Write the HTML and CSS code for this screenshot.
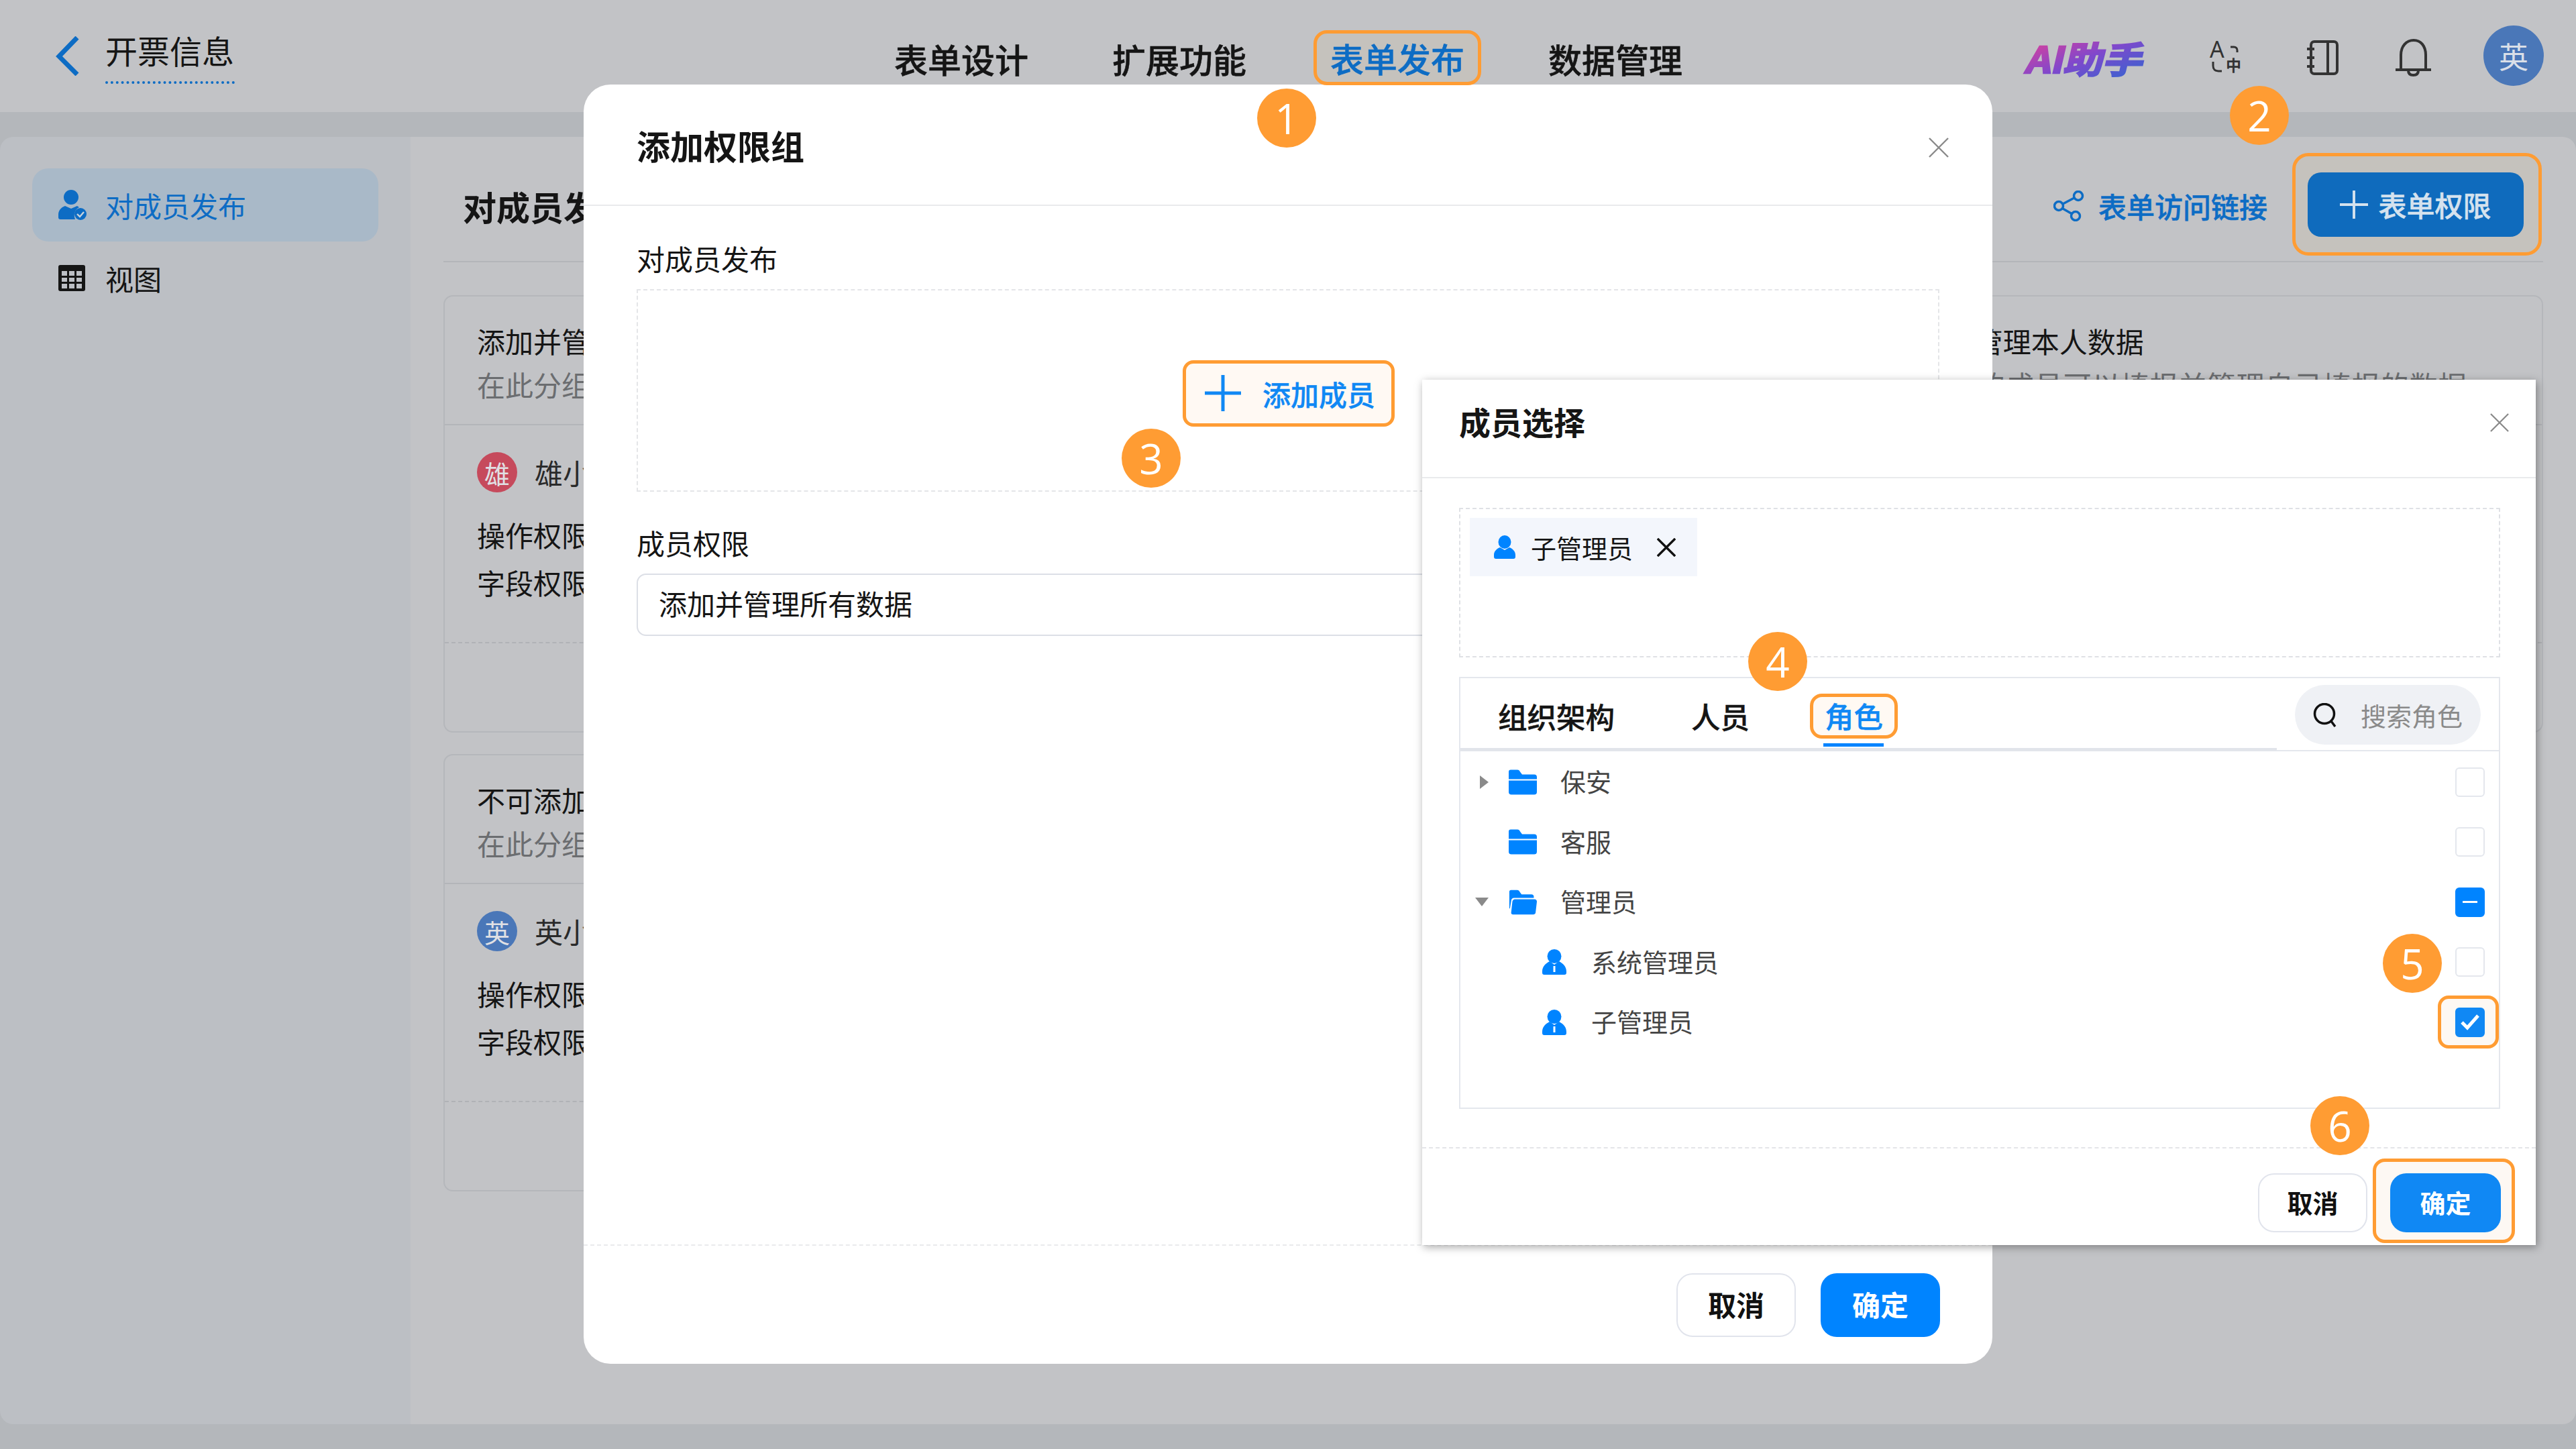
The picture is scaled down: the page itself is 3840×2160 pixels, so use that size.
FILE: index.html
```html
<!DOCTYPE html>
<html lang="zh-CN">
<head>
  <meta charset="UTF-8" />
  <title>开票信息 - 表单发布</title>
  <link rel="stylesheet" href="styles.css">
</head>
<body>

<svg class="icon-defs" width="0" height="0">
  <defs>
    <linearGradient id="ai-grad" x1="0" y1="0" x2="1" y2="1">
      <stop offset="0.1" stop-color="#d8409c"/>
      <stop offset="0.5" stop-color="#8048cc"/>
      <stop offset="0.9" stop-color="#3a62d0"/>
    </linearGradient>
  </defs>
  <symbol id="i-folder" viewBox="0 0 42 37">
    <path fill="#0084ff" d="M0 3a3 3 0 0 1 3-3h10c2 0 3 1 4 3l3 4h18a4 4 0 0 1 4 4v3H0z"/>
    <path fill="#0084ff" d="M0 16h42v17a4 4 0 0 1-4 4H4a4 4 0 0 1-4-4z"/>
  </symbol>
  <symbol id="i-folder-open" viewBox="0 0 46 40">
    <path fill="#0084ff" d="M1 3a3 3 0 0 1 3-3h10c2 0 3 1 4 3l3 4h16a4 4 0 0 1 4 4v2H9c-3 0-5 2-5 5L2 30H1z"/>
    <path fill="#0084ff" d="M10 15h32c3 0 4 2 4 4l-2 17a4 4 0 0 1-4 4H7a3 3 0 0 1-3-3l2-18c0-2 2-4 4-4z"/>
  </symbol>
  <symbol id="i-role" viewBox="0 0 36 38">
    <ellipse fill="#0084ff" cx="18" cy="10.500" rx="10.500" ry="10.500"/>
    <path fill="#0084ff" d="M11 18C5 21 0 26 0 33v2a3 3 0 0 0 3 3h30a3 3 0 0 0 3-3v-2c0-7-5-12-11-15l-7 5z"/>
    <path fill="none" stroke="#fff" stroke-width="3" d="M18 25v9"/>
  </symbol>
  <symbol id="i-person" viewBox="0 0 32 35">
    <ellipse fill="#0084ff" cx="16" cy="10" rx="9.500" ry="10"/>
    <path fill="#0084ff" d="M9 18C4 20 0 24 0 29v3a3 3 0 0 0 3 3h26a3 3 0 0 0 3-3v-3c0-5-4-9-9-11l-7 4z"/>
  </symbol>
  <symbol id="i-x" viewBox="0 0 30 30">
    <path class="x-path" fill="none" stroke="currentColor" d="M1 1l28 28M29 1L1 29"/>
  </symbol>
  <symbol id="i-plus" viewBox="0 0 54 54">
    <path fill="none" stroke="currentColor" stroke-width="5" d="M27 0v54M0 27h54"/>
  </symbol>
</svg>

<header class="topbar">
  <div class="page-title">
    <svg class="back-icon" viewBox="0 0 35 59"><path fill="none" stroke="#0d6cc4" stroke-width="7" d="M32 2L5 30l27 27"/></svg>
    <span class="page-name">开票信息</span>
  </div>
  <nav class="tabs">
    <a class="tab">表单设计</a>
    <a class="tab">扩展功能</a>
    <a class="tab tab-active">表单发布</a>
    <a class="tab">数据管理</a>
  </nav>
  <div class="tools">
    <svg class="ai-logo" viewBox="0 0 179 50">
      <text class="ai-logo-text" x="0" y="44" textLength="175" lengthAdjust="spacingAndGlyphs" transform="translate(9 0) skewX(-13)" fill="url(#ai-grad)" stroke="url(#ai-grad)">AI助手</text>
    </svg>
    <svg class="tool-icon tool-lang" viewBox="0 0 46 48">
      <text x="0" y="24" class="lang-a">A</text>
      <text x="24" y="44" class="lang-zh">中</text>
      <path fill="none" stroke="#333" stroke-width="3" d="M31 8h5c3 0 5 2 5 5v3M5 30v6c0 5 3 8 8 8h5"/>
    </svg>
    <svg class="tool-icon tool-book" viewBox="0 0 48 52">
      <path fill="none" stroke="#333" stroke-width="4" d="M7 7c0-3 2-5 5-5h29c3 0 5 2 5 5v38c0 3-2 5-5 5H12c-3 0-5-2-5-5zM32 2v48M1 13h11M1 26h11M1 39h11"/>
    </svg>
    <svg class="tool-icon tool-bell" viewBox="0 0 55 55">
      <path fill="none" stroke="#333" stroke-width="4" d="M9 46V24C9 11 17 2 28 2s18 9 18 22v22M1 46h53M20 47c0 5 3 7 7.500 7s7.500-2 7.500-7"/>
    </svg>
    <span class="user-avatar">英</span>
  </div>
</header>

<div class="panel">
  <aside class="sidebar">
    <div class="side-item side-item-active">
      <svg class="side-icon" viewBox="0 0 42 46">
        <ellipse fill="#0d6cc4" cx="19" cy="11" rx="11" ry="11"/>
        <path fill="#0d6cc4" d="M10 24C4 26 0 31 0 37v4a3 3 0 0 0 3 3h22c-3-8 0-15 6-18l-3-2-9 4z"/>
        <circle fill="#0d6cc4" cx="33" cy="36" r="9"/>
        <path fill="none" stroke="#c8d3dd" stroke-width="2.400" d="M28 36l4 4 6-7"/>
      </svg>
      <span>对成员发布</span>
    </div>
    <div class="side-item">
      <svg class="side-icon side-icon-grid" viewBox="0 0 40 39">
        <rect fill="#151515" width="40" height="39" rx="3"/>
        <path fill="#bcbfc4" d="M5 9h8v7H5zM16 9h8v7h-8zM27 9h8v7h-8zM5 19h8v6H5zM16 19h8v6h-8zM27 19h8v6h-8zM5 28h8v7H5zM16 28h8v7h-8zM27 28h8v7h-8z"/>
      </svg>
      <span>视图</span>
    </div>
  </aside>

  <main class="content">
    <div class="content-head">
      <h2 class="content-title">对成员发布</h2>
      <a class="share-link">
        <svg class="share-icon" viewBox="0 0 46 46">
          <g fill="none" stroke="#0d6cc4" stroke-width="3.500">
            <circle cx="37" cy="8" r="6.500"/><circle cx="8" cy="23" r="6.500"/><circle cx="33" cy="38" r="6.500"/>
            <path d="M31 11L14 20M14 27l14 8"/>
          </g>
        </svg>
        表单访问链接
      </a>
      <div class="head-action">
        <button class="add-perm">
          <svg class="add-perm-icon"><use href="#i-plus"/></svg>
          表单权限
        </button>
      </div>
    </div>

    <div class="cards">
      <section class="card">
        <div class="card-head">
          <div class="card-title">添加并管理所有数据</div>
          <div class="card-sub">在此分组中的成员可以添加并管理所有数据</div>
        </div>
        <div class="card-body">
          <div class="member"><span class="member-avatar avatar-red">雄</span><span class="member-name">雄小</span></div>
          <div class="perm-line perm-first">操作权限</div>
          <div class="perm-line">字段权限</div>
        </div>
        <div class="card-foot"></div>
      </section>
      <section class="card"></section>
      <section class="card">
        <div class="card-head">
          <div class="card-title">填报并管理本人数据</div>
          <div class="card-sub card-sub-wide">分组中的成员可以填报并管理自己填报的数据</div>
        </div>
        <div class="card-body"></div>
        <div class="card-foot"></div>
      </section>
      <section class="card">
        <div class="card-head">
          <div class="card-title">不可添加</div>
          <div class="card-sub">在此分组</div>
        </div>
        <div class="card-body">
          <div class="member"><span class="member-avatar avatar-blue">英</span><span class="member-name">英小</span></div>
          <div class="perm-line perm-first">操作权限</div>
          <div class="perm-line">字段权限</div>
        </div>
        <div class="card-foot"></div>
      </section>
    </div>
  </main>
</div>

<!-- 添加权限组 -->
<div class="modal modal-group">
  <div class="group-head">
    <h3 class="group-title">添加权限组</h3>
    <svg class="close-icon"><use href="#i-x"/></svg>
  </div>
  <div class="group-body">
    <div class="field-label">对成员发布</div>
    <div class="member-drop">
      <button class="add-member">
        <svg class="add-member-icon"><use href="#i-plus"/></svg>
        添加成员
      </button>
    </div>
    <div class="field-label field-label-second">成员权限</div>
    <div class="select-box">添加并管理所有数据</div>
  </div>
  <div class="group-foot">
    <button class="btn btn-plain">取消</button>
    <button class="btn btn-primary">确定</button>
  </div>
</div>

<!-- 成员选择 -->
<div class="modal modal-picker">
  <div class="picker-head">
    <h3 class="picker-title">成员选择</h3>
    <svg class="close-icon close-icon-small"><use href="#i-x"/></svg>
  </div>
  <div class="picker-body">
    <div class="selected-box">
      <span class="chip">
        <svg class="chip-icon"><use href="#i-person"/></svg>
        <span>子管理员</span>
        <svg class="chip-x"><use href="#i-x"/></svg>
      </span>
    </div>
    <div class="tree-box">
      <div class="tree-head">
        <div class="tree-tabs">
          <span class="tree-tab">组织架构</span>
          <span class="tree-tab">人员</span>
          <span class="tree-tab tree-tab-active">角色</span>
        </div>
        <div class="search-pill">
          <svg class="search-icon" viewBox="0 0 35 36"><g fill="none" stroke="#111" stroke-width="3.500"><circle cx="17" cy="16" r="14.500"/><path d="M27 27l6 8"/></g></svg>
          <span>搜索角色</span>
        </div>
      </div>
      <div class="tree-row">
        <span class="arrow-slot"><i class="arrow-right"></i></span>
        <svg class="folder-icon"><use href="#i-folder"/></svg>
        <span class="tree-label">保安</span>
        <span class="checkbox"></span>
      </div>
      <div class="tree-row">
        <span class="arrow-slot"></span>
        <svg class="folder-icon"><use href="#i-folder"/></svg>
        <span class="tree-label">客服</span>
        <span class="checkbox"></span>
      </div>
      <div class="tree-row">
        <span class="arrow-slot"><i class="arrow-down"></i></span>
        <svg class="folder-icon"><use href="#i-folder-open"/></svg>
        <span class="tree-label">管理员</span>
        <span class="checkbox checkbox-part"></span>
      </div>
      <div class="tree-row tree-row-child">
        <svg class="role-icon"><use href="#i-role"/></svg>
        <span class="tree-label">系统管理员</span>
        <span class="checkbox"></span>
      </div>
      <div class="tree-row tree-row-child">
        <svg class="role-icon"><use href="#i-role"/></svg>
        <span class="tree-label">子管理员</span>
        <span class="check-wrap">
          <span class="checkbox checkbox-on">
            <svg class="check-mark" viewBox="0 0 30 26"><path fill="none" stroke="#fff" stroke-width="5" d="M3 13l8 8L27 3"/></svg>
          </span>
        </span>
      </div>
    </div>
  </div>
  <div class="picker-foot">
    <button class="btn btn-plain btn-small btn-cancel">取消</button>
    <div class="ok-wrap"><button class="btn btn-ok btn-small">确定</button></div>
  </div>
</div>

<span class="badge badge-1">1</span>
<span class="badge badge-2">2</span>
<span class="badge badge-3">3</span>
<span class="badge badge-4">4</span>
<span class="badge badge-5">5</span>
<span class="badge badge-6">6</span>

</body>
</html>
```

FILE: styles.css
```css
* {
  box-sizing: border-box;
}

body {
  position: relative;
  width: 3840px;
  height: 2160px;
  margin: 0;
  overflow: hidden;
  background-color: #b4b7bb;
  color: #151515;
  font-family: "Noto Sans CJK SC", "Noto Sans", sans-serif;
  font-size: 42px;
}

h2, h3 {
  margin: 0;
}

button {
  font-family: inherit;
  border: none;
  cursor: pointer;
}

.icon-defs {
  position: absolute;
}

.x-path {
  stroke-width: var(--x-width, 2.4);
}

/* top bar */
.topbar {
  display: flex;
  height: 167px;
  background-color: #c2c3c6;
}

.page-title {
  display: flex;
  width: 1308px;
  padding: 54px 0 0 83px;
}

.back-icon {
  width: 35px;
  height: 59px;
  margin-right: 39px;
}

.page-name {
  height: 74px;
  font-size: 48px;
  line-height: 46px;
  border-bottom: 4px dotted #0d6cc4;
  align-self: flex-start;
  margin-top: -3px;
  width: 193px;
}

.tabs {
  display: flex;
  gap: 75px;
  align-items: flex-start;
  padding-top: 45px;
}

.tab {
  position: relative;
  z-index: 5;
  height: 82px;
  padding: 0 25px;
  font-size: 50px;
  line-height: 84px;
  font-weight: 500;
  white-space: nowrap;
  -webkit-text-stroke: 0.5px currentColor;
}

.tab-active {
  padding: 0 20px;
  line-height: 72px;
  color: #0d6cc4;
  background-color: #c5c2bd;
  border: 5px solid #ff9c33;
  border-radius: 20px;
}

.tools {
  display: flex;
  align-items: flex-start;
  margin-left: auto;
  padding: 38px 48px 0 0;
}

.ai-logo {
  flex: none;
  width: 179px;
  height: 50px;
  margin-top: 27px;
  overflow: visible;
}

.ai-logo-text {
  font-size: 54px;
  font-weight: 700;
  stroke-width: 2.5px;
}

.tool-icon {
  flex: none;
  overflow: visible;
}

.tool-lang {
  width: 46px;
  height: 48px;
  margin: 24px 0 0 96px;
}

.lang-a {
  font-family: "Noto Sans", sans-serif;
  font-size: 34px;
  fill: #333;
}

.lang-zh {
  font-size: 23px;
  font-weight: 700;
  fill: #333;
}

.tool-book {
  width: 48px;
  height: 52px;
  margin: 22px 0 0 98px;
}

.tool-bell {
  width: 55px;
  height: 55px;
  margin: 20px 0 0 84px;
}

.user-avatar {
  display: flex;
  align-items: center;
  justify-content: center;
  width: 90px;
  height: 90px;
  margin-left: 77px;
  border-radius: 50%;
  background-color: #4a77b8;
  color: #d9dfe8;
  font-size: 44px;
}

/* page under the dialogs */
.panel {
  display: flex;
  height: 1919px;
  margin-top: 37px;
  border-radius: 20px;
  overflow: hidden;
}

.sidebar {
  width: 612px;
  padding: 47px 48px 0;
  background-color: #bcbfc4;
}

.side-item {
  display: flex;
  align-items: center;
  width: 516px;
  height: 109px;
  padding-left: 39px;
  border-radius: 24px;
}

.side-item-active {
  background-color: #a9b9c8;
  color: #0d6cc4;
}

.side-icon {
  flex: none;
  width: 42px;
  height: 46px;
  margin-right: 28px;
}

.side-icon-grid {
  width: 40px;
  height: 39px;
  margin-right: 30px;
}

.content {
  flex: 1;
  padding: 0 49px;
  background-color: #c2c3c6;
}

.content-head {
  display: flex;
  align-items: center;
  height: 187px;
  padding: 20px 0 0 29px;
  border-bottom: 2px solid #b3b5b9;
}

.content-title {
  font-size: 50px;
  font-weight: 700;
}

.share-link {
  display: flex;
  align-items: center;
  gap: 21px;
  margin-left: auto;
  color: #0d6cc4;
  font-weight: 500;
  -webkit-text-stroke: 0.5px currentColor;
}

.share-icon {
  width: 46px;
  height: 46px;
}

.head-action {
  display: flex;
  align-items: center;
  justify-content: center;
  position: relative;
  z-index: 5;
  width: 372px;
  height: 153px;
  margin-left: 37px;
  margin-top: -4px;
  margin-right: 2px;
  background-color: #c5c2bd;
  border: 5px solid #ff9c33;
  border-radius: 24px;
}

.add-perm {
  display: flex;
  align-items: center;
  justify-content: center;
  gap: 15px;
  width: 322px;
  height: 96px;
  margin-right: 4px;
  padding: 0;
  border-radius: 20px;
  background-color: #0f6bbd;
  color: #d5e2ee;
  font-size: 42px;
  font-weight: 500;
  -webkit-text-stroke: 0.5px currentColor;
}

.add-perm-icon {
  width: 42px;
  height: 42px;
  color: #d5e2ee;
}

.cards {
  display: grid;
  grid-template-columns: repeat(3, 1fr);
  gap: 32px 30px;
  margin-top: 49px;
}

.card {
  height: 652px;
  border: 2px solid #b5b7bb;
  border-radius: 14px;
}

.card-head {
  height: 192px;
  padding: 36px 0 0 48px;
  border-bottom: 2px solid #b3b5b9;
  white-space: nowrap;
}

.card-title {
  line-height: 60px;
}

.card-sub {
  line-height: 70px;
  color: #6b6d70;
}

.card-sub-wide {
  letter-spacing: 1px;
}

.card-body {
  height: 323px;
  padding: 40px 0 0 48px;
  white-space: nowrap;
}

.card-foot {
  border-top: 2px dashed #b0b2b6;
}

.member {
  display: flex;
  align-items: center;
  gap: 26px;
  height: 60px;
  color: #2a2a2a;
}

.member-name {
  margin-top: -2px;
}

.member-avatar {
  display: flex;
  align-items: center;
  justify-content: center;
  width: 60px;
  height: 60px;
  border-radius: 50%;
  color: #e0e0e4;
  font-size: 38px;
}

.avatar-red {
  background-color: #c64a5c;
}

.avatar-blue {
  background-color: #4a77b8;
}

.perm-line {
  line-height: 71px;
}

.perm-first {
  margin-top: 27px;
}

/* dialogs */
.modal {
  position: absolute;
  display: flex;
  flex-direction: column;
  background: #fff;
}

.modal-group {
  left: 870px;
  top: 126px;
  z-index: 2;
  width: 2100px;
  height: 1907px;
  border-radius: 40px;
}

.group-head {
  display: flex;
  align-items: center;
  justify-content: space-between;
  flex: none;
  height: 181px;
  padding: 0 65px 0 79px;
  border-bottom: 2px solid #e9eaec;
}

.group-title {
  font-size: 50px;
  font-weight: 700;
}

.close-icon {
  width: 30px;
  height: 30px;
  color: #8a8a8a;
  margin-top: 8px;
}

.close-icon-small {
  width: 28px;
  height: 28px;
  margin-top: 4px;
}

.group-body {
  flex: 1;
  padding: 48px 79px 0;
}

.field-label {
  line-height: 60px;
}

.field-label-second {
  margin-top: 46px;
}

.member-drop {
  display: flex;
  align-items: center;
  justify-content: center;
  height: 302px;
  margin-top: 16px;
  padding-top: 8px;
  border: 2px dashed #e4e5e8;
}

.add-member {
  display: flex;
  align-items: center;
  width: 316px;
  height: 99px;
  margin-left: 2px;
  padding: 0 0 0 28px;
  background-color: #fff9f3;
  border: 5px solid #ff9c33;
  border-radius: 16px;
  color: #1088f4;
  font-size: 42px;
  font-weight: 500;
  -webkit-text-stroke: 0.4px currentColor;
}

.add-member-icon {
  width: 54px;
  height: 54px;
  margin-right: 32px;
  color: #1088f4;
}

.select-box {
  height: 93px;
  margin-top: 16px;
  padding-left: 31px;
  border: 2px solid #dcdfe6;
  border-radius: 14px;
  line-height: 83px;
}

.group-foot {
  display: flex;
  justify-content: flex-end;
  gap: 37px;
  flex: none;
  height: 178px;
  padding: 41px 78px 0 0;
  border-top: 2px dashed #e9eaec;
}

.btn {
  width: 178px;
  height: 95px;
  padding: 0 0 4px;
  border-radius: 24px;
  font-size: 42px;
  font-weight: 700;
}

.btn-plain {
  background: #fff;
  border: 2px solid #e1e4ec;
  color: #111;
}

.btn-primary {
  background: #0084ff;
  color: #fff;
}

.btn-small {
  width: 165px;
  height: 88px;
  padding-bottom: 4px;
  font-size: 38px;
}

.modal-picker {
  left: 2120px;
  top: 566px;
  z-index: 3;
  width: 1660px;
  height: 1290px;
  box-shadow: 2px 3px 12px rgba(0, 0, 0, 0.35);
}

.picker-head {
  display: flex;
  align-items: center;
  justify-content: space-between;
  flex: none;
  height: 147px;
  padding: 0 40px 22px 55px;
  border-bottom: 2px solid #e9eaec;
}

.picker-title {
  font-size: 47px;
  font-weight: 700;
}

.picker-body {
  flex: 1;
  padding: 44px 53px 0 55px;
}

.selected-box {
  height: 223px;
  padding: 13px 14px;
  border: 2px dashed #dfe1e5;
}

.chip {
  display: inline-flex;
  align-items: center;
  height: 87px;
  width: 339px;
  padding-left: 36px;
  background-color: #f3f6fc;
  font-size: 38px;
}

.chip-icon {
  width: 32px;
  height: 35px;
  margin-right: 23px;
}

.chip-x {
  --x-width: 3.6;
  width: 28px;
  height: 28px;
  margin-left: 36px;
  color: #111;
}

.tree-box {
  height: 644px;
  margin-top: 29px;
  border: 2px solid #e4e7ed;
}

.tree-head {
  display: flex;
  height: 109px;
  border-bottom: 2px solid #e4e7ed;
}

.tree-tabs {
  display: flex;
  align-items: flex-start;
  width: 1217px;
  height: 108px;
  padding: 23px 0 0 56px;
  border-bottom: 4px solid #e1e4ea;
}

.tree-tab {
  margin-right: 114px;
  font-size: 43.5px;
  line-height: 67px;
  font-weight: 500;
  -webkit-text-stroke: 0.4px currentColor;
}

.tree-tab-active {
  position: relative;
  margin-left: -24px;
  padding: 0 17px;
  height: 67px;
  line-height: 55px;
  background-color: #fff9f3;
  border: 5px solid #ff9c33;
  border-radius: 18px;
  color: #1088f4;
}

.tree-tab-active::after {
  content: "";
  position: absolute;
  left: 15px;
  right: 16px;
  top: 69px;
  height: 5px;
  background-color: #0084ff;
}

.search-pill {
  display: flex;
  align-items: center;
  width: 277px;
  height: 89px;
  margin: 10px 0 0 27px;
  padding-left: 27px;
  border-radius: 45px;
  background-color: #eff1f5;
  color: #8a8a8a;
  font-size: 38px;
}

.search-icon {
  width: 35px;
  height: 36px;
  margin-right: 36px;
}

.tree-row {
  display: flex;
  align-items: center;
  height: 89.5px;
  padding: 0 21px 0 22px;
  color: #444;
  font-size: 38px;
}

.tree-head + .tree-row {
  margin-top: 1px;
}

.tree-row-child {
  padding-left: 122px;
}

.tree-label {
  margin: -4px 0 0 -1px;
}

.arrow-slot {
  display: flex;
  justify-content: center;
  flex: none;
  width: 50px;
  padding-right: 30px;
}

.arrow-right {
  width: 0;
  height: 0;
  border-left: 13px solid #8a8a8a;
  border-top: 10px solid transparent;
  border-bottom: 10px solid transparent;
  margin-left: 6px;
}

.arrow-down {
  width: 0;
  height: 0;
  border-top: 13px solid #8a8a8a;
  border-left: 10px solid transparent;
  border-right: 10px solid transparent;
}

.folder-icon {
  flex: none;
  width: 42px;
  height: 38px;
  margin-right: 36px;
}

.role-icon {
  flex: none;
  width: 36px;
  height: 38px;
  margin-right: 38px;
}

.checkbox {
  display: flex;
  align-items: center;
  justify-content: center;
  width: 44px;
  height: 44px;
  margin-left: auto;
  background: #fff;
  border: 2px solid #e4e7ed;
  border-radius: 6px;
}

.checkbox-part {
  background: #0084ff;
  border-color: #0084ff;
}

.checkbox-part::after {
  content: "";
  width: 22px;
  height: 3px;
  background: #fff;
}

.checkbox-on {
  margin: 0;
  background: #1088f4;
  border-color: #1088f4;
}

.check-mark {
  width: 30px;
  height: 26px;
}

.check-wrap {
  display: flex;
  align-items: center;
  width: 91px;
  height: 79px;
  margin-left: auto;
  margin-right: -21px;
  padding-left: 21px;
  background-color: #fdf8f3;
  border: 5px solid #ff9c33;
  border-radius: 16px;
}

.picker-foot {
  display: flex;
  justify-content: flex-end;
  align-items: flex-start;
  flex: none;
  height: 146px;
  padding: 15px 31px 0 0;
  border-top: 2px dashed #e4e5e8;
}

.btn-cancel {
  width: 163px;
  margin-top: 22px;
  margin-right: 8px;
}

.ok-wrap {
  width: 212px;
  height: 126px;
  padding: 17px 0 0 21px;
  background-color: #fdf8f3;
  border: 5px solid #ff9c33;
  border-radius: 18px;
}

.btn-ok {
  background: #1088f4;
  color: #fff;
}

/* numbered callouts */
.badge {
  position: absolute;
  z-index: 6;
  display: flex;
  align-items: center;
  justify-content: center;
  width: 88px;
  height: 88px;
  border-radius: 50%;
  background-color: #ff9c33;
  color: #fff;
  font-family: "Open Sans", "Noto Sans", sans-serif;
  font-size: 62px;
}

.badge-1 { left: 1874px; top: 132px; }
.badge-2 { left: 3324px; top: 128px; }
.badge-3 { left: 1672px; top: 639px; }
.badge-4 { left: 2606px; top: 942px; }
.badge-5 { left: 3552px; top: 1392px; }
.badge-6 { left: 3444px; top: 1634px; }
```
